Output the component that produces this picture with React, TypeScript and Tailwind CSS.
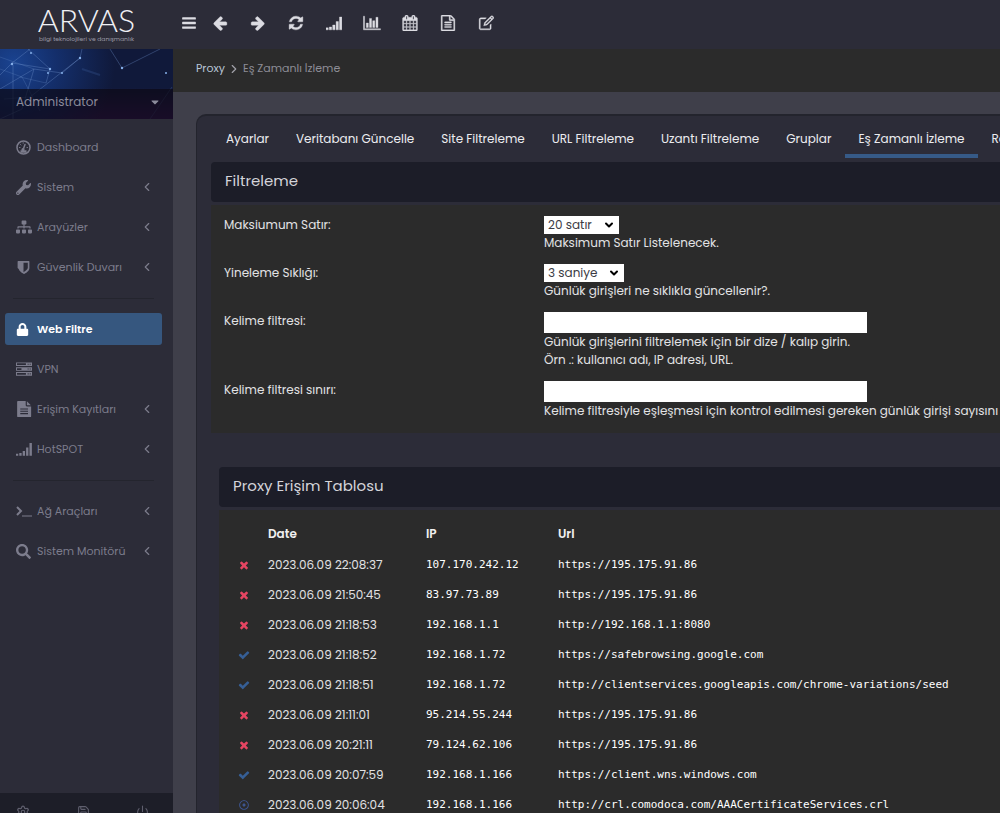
import type { ReactNode } from "react";
import { FaWrench, FaSitemap, FaLock, FaSearch, FaRegDotCircle, FaCaretDown } from "react-icons/fa";
import { ChevronLeft, ChevronRight, ChevronDown, Settings, Save, Power } from "lucide-react";

type Status = "denied" | "allowed" | "direct";

const paths = {
  bars: "M1664 1344v128q0 26-19 45t-45 19h-1408q-26 0-45-19t-19-45v-128q0-26 19-45t45-19h1408q26 0 45 19t19 45zm0-512v128q0 26-19 45t-45 19h-1408q-26 0-45-19t-19-45v-128q0-26 19-45t45-19h1408q26 0 45 19t19 45zm0-512v128q0 26-19 45t-45 19h-1408q-26 0-45-19t-19-45v-128q0-26 19-45t45-19h1408q26 0 45 19t19 45z",
  back: "M1664 896v128q0 53-32.5 90.5t-84.5 37.5h-704l293 294q38 36 38 90t-38 90l-75 76q-37 37-90 37-52 0-91-37l-651-652q-37-37-37-90 0-52 37-91l651-650q38-38 91-38 52 0 90 38l75 74q38 38 38 91t-38 91l-293 293h704q52 0 84.5 37.5t32.5 90.5z",
  forward: "M1600 960q0 54-37 91l-651 651q-39 37-91 37-51 0-90-37l-75-75q-38-38-38-91t38-91l293-293h-704q-52 0-84.5-37.5t-32.5-90.5v-128q0-53 32.5-90.5t84.5-37.5h704l-293-294q-38-36-38-90t38-90l75-75q38-38 90-38 53 0 91 38l651 651q37 35 37 90z",
  refresh: "M1639 1056q0 5-1 7-64 268-268 434.5t-478 166.5q-146 0-282.5-55t-243.5-157l-129 129q-19 19-45 19t-45-19-19-45v-448q0-26 19-45t45-19h448q26 0 45 19t19 45-19 45l-137 137q71 66 161 102t187 36q134 0 250-65t186-179q11-17 53-117 8-23 30-23h192q13 0 22.5 9.5t9.5 22.5zm25-800v448q0 26-19 45t-45 19h-448q-26 0-45-19t-19-45 19-45l138-138q-148-137-349-137-134 0-250 65t-186 179q-11 17-53 117-8 23-30 23h-199q-13 0-22.5-9.5t-9.5-22.5v-7q65-268 270-434.5t480-166.5q146 0 284 55.5t245 156.5l130-129q19-19 45-19t45 19 19 45z",
  signal: "M0 1440h250v224H0zM370 1344h260v320H370zM750 1120h260v544H750zM1130 736h260v928H1130zM1510 224h270v1440H1510z",
  chart: "M0 128h128v1408h1792v128H0zM320 896h230v512H320zM680 384h230v1024H680zM1040 640h230v768H1040zM1400 256h230v1152H1400z",
  calendar: "M192 1664h288v-288h-288v288zm352 0h320v-288h-320v288zm-352-352h288v-320h-288v320zm352 0h320v-320h-320v320zm-352-384h288v-288h-288v288zm736 736h320v-288h-320v288zm-384-736h320v-288h-320v288zm768 736h288v-288h-288v288zm-384-352h320v-320h-320v320zm-352-864v-288q0-13-9.5-22.5t-22.5-9.5h-64q-13 0-22.5 9.5t-9.5 22.5v288q0 13 9.5 22.5t22.5 9.5h64q13 0 22.5-9.5t9.5-22.5zm736 864h288v-320h-288v320zm-384-384h320v-288h-320v288zm384 0h288v-288h-288v288zm32-480v-288q0-13-9.5-22.5t-22.5-9.5h-64q-13 0-22.5 9.5t-9.5 22.5v288q0 13 9.5 22.5t22.5 9.5h64q13 0 22.5-9.5t9.5-22.5zm384-64v1280q0 52-38 90t-90 38h-1408q-52 0-90-38t-38-90v-1280q0-52 38-90t90-38h128v-96q0-66 47-113t113-47h64q66 0 113 47t47 113v96h384v-96q0-66 47-113t113-47h64q66 0 113 47t47 113v96h128q52 0 90 38t38 90z",
  file: "M1596 380q28 28 48 76t20 88v1152q0 40-28 68t-68 28h-1344q-40 0-68-28t-28-68v-1600q0-40 28-68t68-28h896q40 0 88 20t76 48zm-444-244v376h376q-10-29-22-41l-313-313q-12-12-41-22zm384 1528v-1024h-416q-40 0-68-28t-28-68v-416h-768v1536h1280zm-1024-864q0-14 9-23t23-9h704q14 0 23 9t9 23v64q0 14-9 23t-23 9h-704q-14 0-23-9t-9-23v-64zm736 224q14 0 23 9t9 23v64q0 14-9 23t-23 9h-704q-14 0-23-9t-9-23v-64q0-14 9-23t23-9h704zm0 256q14 0 23 9t9 23v64q0 14-9 23t-23 9h-704q-14 0-23-9t-9-23v-64q0-14 9-23t23-9h704z",
  fileSolid: "M224 0H1088V480Q1088 608 1216 608H1696V1696Q1696 1792 1600 1792H224Q128 1792 128 1696V96Q128 0 224 0zM1216 20L1670 480H1216zM480 832V960H1344V832zM480 1088V1216H1344V1088zM480 1344V1472H1344V1344z",
  edit: "M1472 1000v472q0 80-56 136t-136 56H320q-80 0-136-56t-56-136V512q0-80 56-136t136-56h620l-128 128H320q-64 0-64 64v960q0 64 64 64h960q64 0 64-64V1128zM1440 128q48-48 112-48t112 48l64 64q48 48 48 112t-48 112L1016 1128l-376 88 88-376zM840 900l-40 156 156-40 520-520-116-116zM1450 290l116 116 72-72q24-24 0-48l-68-68q-24-24-48 0z",
  shield: "M1408 960V320H896v1137q119-63 213-137 299-234 299-360zM1600 192v768q0 86-33.500 170.500t-83 150-118 127.500-126.500 103-121 77.500-89.500 49.500-42.500 20q-12 6-26 6t-26-6q-16-7-42.500-20t-89.500-49.500-121-77.500-126.500-103-118-127.500-83-150T192 960V192q0-26 19-45t45-19h1280q26 0 45 19t19 45z",
  server: "M0 160h1792v400H0zM110 260v200h1000v-200zM1300 300v120h120v-120zM1530 300v120h120v-120zM0 700h1792v400H0zM110 800v200h500v-200zM1300 840v120h120v-120zM1530 840v120h120v-120zM0 1240h1792v400H0zM110 1340v200h1000v-200zM1300 1380v120h120v-120zM1530 1380v120h120v-120z",
  times: "M1490 1322q0 40-28 68l-136 136q-28 28-68 28t-68-28l-294-294-294 294q-28 28-68 28t-68-28l-136-136q-28-28-28-68t28-68l294-294-294-294q-28-28-28-68t28-68l136-136q28-28 68-28t68 28l294 294 294-294q28-28 68-28t68 28l136 136q28 28 28 68t-28 68l-294 294 294 294q28 28 28 68z",
  check: "M1671 566q0 40-28 68l-724 724-136 136q-28 28-68 28t-68-28l-136-136-362-362q-28-28-28-68t28-68l136-136q28-28 68-28t68 28l294 295 656-657q28-28 68-28t68 28l136 136q28 28 28 68z",
};

interface GlyphProps {
  d: string;
  size?: number;
  wide?: boolean;
  bold?: boolean;
}

function Glyph({ d, size = 16, wide = false, bold = false }: GlyphProps) {
  return (
    <svg
      width={wide ? size + 2 : size}
      height={size}
      viewBox={wide ? "0 0 1920 1792" : "0 0 1792 1792"}
      fill="currentColor"
      fillRule="evenodd"
      stroke={bold ? "currentColor" : "none"}
      strokeWidth="40"
      aria-hidden="true"
    >
      <path d={d} />
    </svg>
  );
}

function GaugeIcon() {
  return (
    <svg width="15" height="15" viewBox="0 0 30 30" fill="none" stroke="currentColor" strokeWidth="3" aria-hidden="true">
      <circle cx="15" cy="15" r="13" />
      <path d="M14 20L18 9" strokeLinecap="round" />
      <path d="M9 23h12" strokeWidth="5" />
      <circle cx="14" cy="19" r="3" fill="currentColor" stroke="none" />
      <path d="M7 15h1M9 9l1 1M14 6h1M22 15h1" strokeWidth="2" strokeLinecap="round" />
    </svg>
  );
}

function PromptIcon() {
  return (
    <svg width="16" height="14" viewBox="0 0 16 14" fill="none" stroke="currentColor" strokeWidth="2" aria-hidden="true">
      <path d="M1 3l4 4-4 4" />
      <path d="M6 12h10" strokeWidth="1" />
    </svg>
  );
}

const toolbar = [
  { label: "Geri", d: paths.back },
  { label: "İleri", d: paths.forward },
  { label: "Yenile", d: paths.refresh },
  { label: "Sinyal", d: paths.signal },
  { label: "Grafik", d: paths.chart, wide: true },
  { label: "Takvim", d: paths.calendar },
  { label: "Rapor", d: paths.file },
  { label: "Düzenle", d: paths.edit },
];

interface NavItem {
  label: string;
  icon: ReactNode;
  active?: boolean;
  children?: boolean;
}

const navGroups: NavItem[][] = [
  [
    { label: "Dashboard", icon: <GaugeIcon /> },
    { label: "Sistem", icon: <FaWrench size={15} />, children: true },
    { label: "Arayüzler", icon: <FaSitemap size={16} />, children: true },
    { label: "Güvenlik Duvarı", icon: <Glyph d={paths.shield} size={15} />, children: true },
  ],
  [
    { label: "Web Filtre", icon: <FaLock size={13} />, active: true },
    { label: "VPN", icon: <Glyph d={paths.server} /> },
    { label: "Erişim Kayıtları", icon: <Glyph d={paths.fileSolid} />, children: true },
    { label: "HotSPOT", icon: <Glyph d={paths.signal} />, children: true },
  ],
  [
    { label: "Ağ Araçları", icon: <PromptIcon />, children: true },
    { label: "Sistem Monitörü", icon: <FaSearch size={15} />, children: true },
  ],
];

const tabs = [
  "Ayarlar",
  "Veritabanı Güncelle",
  "Site Filtreleme",
  "URL Filtreleme",
  "Uzantı Filtreleme",
  "Gruplar",
  "Eş Zamanlı İzleme",
  "Raporlar",
];

const logs: { status: Status; date: string; ip: string; url: string }[] = [
  { status: "denied", date: "2023.06.09 22:08:37", ip: "107.170.242.12", url: "https://195.175.91.86" },
  { status: "denied", date: "2023.06.09 21:50:45", ip: "83.97.73.89", url: "https://195.175.91.86" },
  { status: "denied", date: "2023.06.09 21:18:53", ip: "192.168.1.1", url: "http://192.168.1.1:8080" },
  { status: "allowed", date: "2023.06.09 21:18:52", ip: "192.168.1.72", url: "https://safebrowsing.google.com" },
  { status: "allowed", date: "2023.06.09 21:18:51", ip: "192.168.1.72", url: "http://clientservices.googleapis.com/chrome-variations/seed" },
  { status: "denied", date: "2023.06.09 21:11:01", ip: "95.214.55.244", url: "https://195.175.91.86" },
  { status: "denied", date: "2023.06.09 20:21:11", ip: "79.124.62.106", url: "https://195.175.91.86" },
  { status: "allowed", date: "2023.06.09 20:07:59", ip: "192.168.1.166", url: "https://client.wns.windows.com" },
  { status: "direct", date: "2023.06.09 20:06:04", ip: "192.168.1.166", url: "http://crl.comodoca.com/AAACertificateServices.crl" },
];

function StatusIcon({ status }: { status: Status }) {
  if (status === "denied") return <span className="text-[#e64562]"><Glyph d={paths.times} size={12} /></span>;
  if (status === "allowed") return <span className="text-[#365f96]"><Glyph d={paths.check} size={12} /></span>;
  return <span className="text-[#3d5590]"><FaRegDotCircle size={10} /></span>;
}

function Header() {
  return (
    <header className="flex h-[49px] shrink-0 items-center bg-[#2c2c38] pb-[3px]">
      <a href="#" className="flex w-[173px] shrink-0 flex-col items-center text-[#f0f0f4]">
        <span className="font-['Lato'] text-[32px] leading-[32px] font-light">ARVAS</span>
        <span className="text-[6px] leading-[6px] text-[#9a9aa6]">bilgi teknolojileri ve danışmanlık</span>
      </a>
      <div className="ml-1 flex items-center text-[#dcdce2]">
        <button type="button" aria-label="Menü" className="flex w-6 justify-center">
          <Glyph d={paths.bars} />
        </button>
        {toolbar.map(t => (
          <button key={t.label} type="button" aria-label={t.label} className="flex w-[38px] justify-center">
            <Glyph d={t.d} wide={t.wide} bold />
          </button>
        ))}
      </div>
    </header>
  );
}

function UserBanner() {
  return (
    <div className="relative flex h-[70px] shrink-0 flex-col justify-end overflow-hidden bg-[#10193a] bg-[radial-gradient(circle_at_8%_20%,#1a4390_0%,#142f6c_25%,transparent_60%),linear-gradient(to_bottom,transparent_55%,#3a1a58_100%)]">
      <svg className="absolute inset-0 h-full w-full" viewBox="0 0 173 70" preserveAspectRatio="none" fill="none" aria-hidden="true">
        <g stroke="#6f93cc" strokeOpacity="0.5" strokeWidth="0.7">
          <path d="M0 26L12 14 30 0M12 14L50 20M80 9L30 48M50 20L28 0M13 16v54M0 40L34 20 62 24M80 9L82 0M110 0L122 19 160 0M34 20L22 60 0 70M62 24L80 9M50 20L46 34" />
          <path d="M0 20L22 28 40 62M150 70L172 38M0 8L34 20M20 28L46 34M4 50L30 48" strokeOpacity="0.35" />
        </g>
        <path d="M82 20l18 6" stroke="#4466a6" strokeOpacity="0.25" strokeWidth="2" />
        <g fill="#86b0ea">
          <circle cx="80" cy="9" r="1.200" />
          <circle cx="122" cy="19" r="1.200" />
          <circle cx="12" cy="15" r="1.200" />
          <circle cx="50" cy="20" r="1.200" />
          <circle cx="62" cy="24" r="1" />
          <circle cx="48" cy="24" r="1" />
          <circle cx="166" cy="24" r="1" />
          <circle cx="31" cy="4" r="1" />
        </g>
      </svg>
      <button
        type="button"
        className="relative flex h-[30px] items-center justify-between bg-[#0b0914b3] pr-3 pb-1 pl-4 text-xs text-[#8b8b9b]"
      >
        Administrator
        <FaCaretDown size={12} />
      </button>
    </div>
  );
}

function Sidebar() {
  return (
    <aside className="flex w-[173px] shrink-0 flex-col bg-[#2c2c38]">
      <UserBanner />
      <nav className="min-h-0 flex-1 pt-3 pr-[11px] pl-[5px]">
        {navGroups.map((group, i) => (
          <div key={group[0].label}>
            {i > 0 && (
              <div className="flex h-[30px] items-center px-2">
                <hr className="w-full border-[#24252e]" />
              </div>
            )}
            <ul className="flex flex-col gap-2">
              {group.map(item => (
                <li key={item.label}>
                  <a
                    href="#"
                    className={
                      item.active
                        ? "flex h-8 items-center rounded-[3px] bg-[#36577f] pl-[11px] text-[11px] font-semibold text-white"
                        : "flex h-8 items-center pl-[11px] text-[11px] text-[#7c7c8c]"
                    }
                  >
                    <span className="flex w-[21px] shrink-0">{item.icon}</span>
                    <span className="flex-1 whitespace-nowrap">{item.label}</span>
                    {item.children && <ChevronLeft size={14} strokeWidth={2} className="mr-2" />}
                  </a>
                </li>
              ))}
            </ul>
          </div>
        ))}
      </nav>
      <div className="flex h-5 shrink-0 items-start justify-between overflow-hidden bg-[#1d1e28] pt-3 pr-6 pl-4 text-[#5f5f6e]">
        <button type="button" aria-label="Ayarlar"><Settings size={14} /></button>
        <button type="button" aria-label="Kaydet"><Save size={13} /></button>
        <button type="button" aria-label="Kapat"><Power size={13} /></button>
      </div>
    </aside>
  );
}

function SelectBox({ id, options, className }: { id: string; options: string[]; className: string }) {
  return (
    <div className={`relative h-[18px] ${className}`}>
      <select id={id} className="h-full w-full appearance-none bg-white pl-1 text-xs leading-[18px] text-[#3c3c44]">
        {options.map(o => (
          <option key={o}>{o}</option>
        ))}
      </select>
      <ChevronDown size={12} strokeWidth={4} className="pointer-events-none absolute top-[3px] right-1 text-black" />
    </div>
  );
}

function Field({ id, label, help, children }: { id: string; label: string; help: string[]; children: ReactNode }) {
  return (
    <div className="flex">
      <label htmlFor={id} className="w-80 shrink-0">
        {label}
      </label>
      <div className="whitespace-nowrap">
        {children}
        {help.map(h => (
          <p key={h}>{h}</p>
        ))}
      </div>
    </div>
  );
}

function FilterForm() {
  return (
    <form className="mt-[3px] flex flex-col gap-3 bg-[#2b2b2b] pt-[11px] pb-[13px] pl-[13px] text-xs leading-[18px] text-[#e2e2e4]">
      <Field id="rows" label="Maksiumum Satır:" help={["Maksimum Satır Listelenecek."]}>
        <SelectBox id="rows" options={["20 satır", "50 satır", "100 satır"]} className="w-[75px]" />
      </Field>
      <Field id="interval" label="Yineleme Sıklığı:" help={["Günlük girişleri ne sıklıkla güncellenir?."]}>
        <SelectBox id="interval" options={["3 saniye", "5 saniye", "10 saniye"]} className="w-20" />
      </Field>
      <Field
        id="filter"
        label="Kelime filtresi:"
        help={["Günlük girişlerini filtrelemek için bir dize / kalıp girin.", "Örn .: kullanıcı adı, IP adresi, URL."]}
      >
        <input id="filter" type="text" className="block h-[21px] w-[323px] bg-white px-1 text-[#3c3c44]" />
      </Field>
      <Field
        id="limit"
        label="Kelime filtresi sınırı:"
        help={["Kelime filtresiyle eşleşmesi için kontrol edilmesi gereken günlük girişi sayısını girin."]}
      >
        <input id="limit" type="text" className="block h-[21px] w-[323px] bg-white px-1 text-[#3c3c44]" />
      </Field>
    </form>
  );
}

function AccessTable() {
  return (
    <table className="mt-[3px] w-full table-fixed bg-[#2b2b2b] text-left text-xs text-[#e2e2e4]">
      <colgroup>
        <col className="w-[49px]" />
        <col className="w-[158px]" />
        <col className="w-[132px]" />
        <col />
      </colgroup>
      <thead>
        <tr className="h-10 text-[#f0f0f0]">
          <th aria-label="Durum" />
          <th className="pt-2 font-semibold">Date</th>
          <th className="pt-2 font-semibold">IP</th>
          <th className="pt-2 font-semibold">Url</th>
        </tr>
      </thead>
      <tbody>
        {logs.map(log => (
          <tr key={log.date} className="h-[30px]">
            <td>
              <span className="flex justify-center"><StatusIcon status={log.status} /></span>
            </td>
            <td>{log.date}</td>
            <td className="pt-px font-['DejaVu_Sans_Mono',monospace] text-[11px] text-white">{log.ip}</td>
            <td className="pt-px font-['DejaVu_Sans_Mono',monospace] text-[11px] whitespace-nowrap text-white">{log.url}</td>
          </tr>
        ))}
      </tbody>
    </table>
  );
}

export default function App() {
  return (
    <div className="flex h-screen flex-col overflow-hidden bg-[#3f3f4a] font-['Poppins','Inter',sans-serif]">
      <Header />
      <div className="flex min-h-0 flex-1">
        <Sidebar />
        <main className="min-w-0 flex-1 overflow-hidden">
          <div className="flex h-[43px] items-center gap-0.5 bg-[#2b2b2b] pb-1 pl-[23px] text-[11px]">
            <a href="#" className="text-[#b9c6d8]">Proxy</a>
            <ChevronRight size={14} className="text-[#a0a0a8]" />
            <span className="text-[#8d8d96]">Eş Zamanlı İzleme</span>
          </div>

          <section className="mt-[22px] ml-[23px] rounded-tl-[10px] border-t-2 border-l border-[#23242d] bg-[#2c2c38] pl-[14px]">
            <div className="flex h-[42px] gap-px overflow-hidden pl-0.5 text-xs whitespace-nowrap text-[#ececf0]">
              {tabs.map(t => (
                <a
                  key={t}
                  href="#"
                  className={
                    t === "Eş Zamanlı İzleme"
                      ? "flex items-center border-b-4 border-[#365a87] px-[13px] pt-2"
                      : "flex items-center border-b-4 border-transparent px-[13px] pt-2"
                  }
                >
                  {t}
                </a>
              ))}
            </div>

            <h2 className="mt-1 flex h-10 items-center rounded-l bg-[#1c1d28] pb-0.5 pl-3.5 text-[15px] text-[#d4d4da]">Filtreleme</h2>
            <FilterForm />

            <div className="mt-[34px] pl-2">
              <h2 className="flex h-10 items-center rounded-l bg-[#1c1d28] pb-0.5 pl-3.5 text-[15px] text-[#d4d4da]">Proxy Erişim Tablosu</h2>
              <AccessTable />
            </div>
          </section>
        </main>
      </div>
    </div>
  );
}
